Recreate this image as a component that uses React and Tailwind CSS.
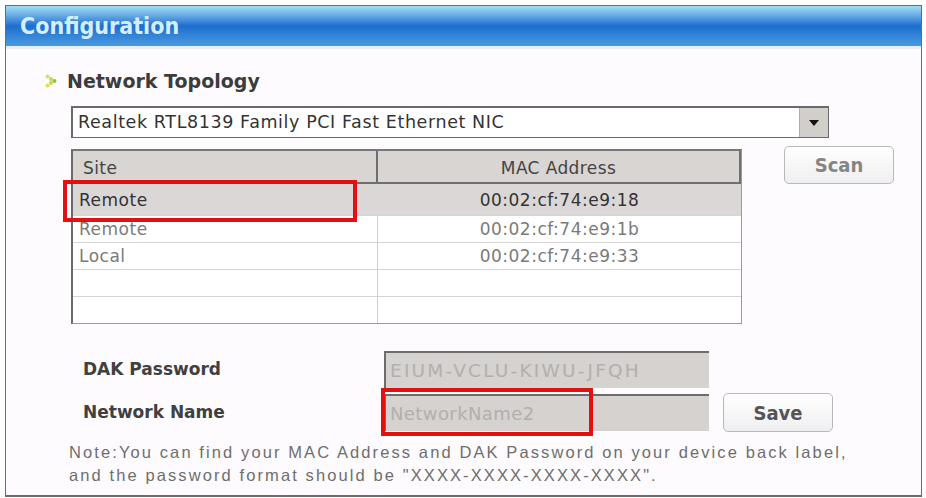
import React from 'react';

const rows = [
  { site: 'Remote', mac: '00:02:cf:74:e9:18', selected: true },
  { site: 'Remote', mac: '00:02:cf:74:e9:1b' },
  { site: 'Local', mac: '00:02:cf:74:e9:33' },
  { site: '', mac: '' },
  { site: '', mac: '' },
];

const ui = { fontFamily: '"DejaVu Sans", "Noto Sans", sans-serif' };
const cond = { fontFamily: '"DejaVu Sans Condensed", "DejaVu Sans", sans-serif' };
const arial = { fontFamily: '"Liberation Sans", Arial, sans-serif' };

function Bullet() {
  return (
    <svg width="12" height="14" viewBox="0 0 12 14" className="shrink-0">
      <circle cx="2.5" cy="2.5" r="2" fill="#e0de5a" />
      <circle cx="6" cy="5" r="2" fill="#c9d84a" />
      <circle cx="9.5" cy="7" r="2" fill="#8fc43c" />
      <circle cx="6" cy="9" r="2" fill="#c9d84a" />
      <circle cx="2.5" cy="11.5" r="2" fill="#e0de5a" />
    </svg>
  );
}

function XpButton({ children, className }) {
  return (
    <div
      className={
        'flex items-center justify-center rounded-[5px] border border-[#b9b9b9] bg-gradient-to-b from-white to-[#efeef0] text-[20px] font-bold ' +
        className
      }
      style={cond}
    >
      {children}
    </div>
  );
}

export default function App() {
  return (
    <div className="w-[926px] h-[498px] bg-white overflow-hidden">
      {/* caption line above the panel, clipped by the crop */}
      <div className="h-[5px] overflow-hidden pl-[2px]">
        <div className="-mt-[18px] text-[17px] leading-[20px] font-bold text-black" style={arial}>
          Figure 3-14 Configuration Utility: Network Topology
        </div>
      </div>

      <div className="ml-[5px] w-[917px] h-[492px] border border-[#6b6b6b] border-b-2 bg-[#fdfbfd] flex flex-col">
        {/* title bar */}
        <div className="h-[40px] shrink-0 bg-gradient-to-b from-[#a6def6] via-[#1c6ecf] to-[#4a9ae0] flex items-center pl-[14px]">
          <span className="text-[23px] font-bold text-[#d3efff]" style={cond}>
            Configuration
          </span>
        </div>
        <div className="h-[3px] shrink-0 bg-[#e9eef3]" />

        <div className="relative flex-1 pl-[39px]">
          {/* section heading */}
          <div className="mt-[21px] flex h-[22px] items-center gap-[10px]">
            <Bullet />
            <span className="text-[19px] font-bold text-[#3c3c3c]" style={ui}>
              Network Topology
            </span>
          </div>

          {/* adapter select */}
          <div className="ml-[26px] mt-[14px] flex h-[32px] w-[758px] items-center border border-[#6a6a6a] border-l-2 border-t-2 bg-white">
            <span className="flex-1 pl-[5px] text-[17.5px] tracking-[0.6px] text-[#333]" style={ui}>
              Realtek RTL8139 Family PCI Fast Ethernet NIC
            </span>
            <div className="flex h-[29px] w-[29px] items-center justify-center border-l border-[#b0b0b0] bg-[#d2cfcb]">
              <svg width="10" height="6" viewBox="0 0 10 6">
                <path d="M0 0h10L5 6z" fill="#111" />
              </svg>
            </div>
          </div>

          {/* site table + scan */}
          <div className="ml-[26px] mt-[8px] flex items-start">
            <div className="mt-[3px] w-[671px] border border-[#9a9a9a] border-l-2 border-l-[#6a6a6a] border-t-2 border-t-[#777] bg-white">
              <div className="flex h-[33px] bg-[#d8d5d2] border-b-2 border-[#6f6f6f] text-[17px] tracking-[0.4px] text-[#444]" style={ui}>
                <div className="w-[305px] border-r-2 border-[#6f6f6f] pl-[10px] flex items-end pb-[1px]">Site</div>
                <div className="flex-1 border-r-2 border-[#6f6f6f] flex items-end justify-center pb-[1px]">MAC Address</div>
              </div>
              {rows.map((r, i) => (
                <div
                  key={i}
                  className={
                    'flex text-[17px] tracking-[0.5px] ' +
                    (i === 0 ? 'h-[31px] bg-[#dad7d6] text-[#333]' : 'h-[27px] border-t border-[#d4d4d4] text-[#7a7a7a]')
                  }
                  style={ui}
                >
                  <div className={'w-[305px] pl-[6px] flex items-center pt-[2px] ' + (i === 0 ? '' : 'border-r border-[#cfcfcf]')}>
                    {r.site}
                  </div>
                  <div className="flex-1 flex items-center justify-center pt-[2px]">{r.mac}</div>
                </div>
              ))}
            </div>
            <XpButton className="ml-[42px] h-[38px] w-[110px] text-[#858585]">Scan</XpButton>
          </div>

          {/* credentials */}
          <div className="ml-[38px] mt-[27px] flex items-center">
            <span className="w-[301px] text-[17px] font-bold text-[#404040]" style={ui}>
              DAK Password
            </span>
            <div className="flex h-[37px] w-[325px] items-center border-t-2 border-l-2 border-[#6c6c6c] bg-[#d5d2cf] pl-[4px] text-[18.5px] tracking-[2.2px] text-[#b3afae]" style={ui}>
              EIUM-VCLU-KIWU-JFQH
            </div>
          </div>
          <div className="ml-[38px] mt-[5px] flex items-center">
            <span className="w-[301px] text-[17px] font-bold text-[#404040]" style={ui}>
              Network Name
            </span>
            <div className="flex h-[37px] w-[325px] items-center border-t-2 border-l-2 border-[#6c6c6c] bg-[#d5d2cf] pl-[4px] text-[18px] tracking-[0.4px] text-[#b3afae]" style={ui}>
              NetworkName2
            </div>
            <XpButton className="ml-[14px] h-[39px] w-[110px] text-[#555]">Save</XpButton>
          </div>

          <div className="ml-[24px] mt-[9px] text-[16.5px] leading-[23px] tracking-[2.1px] text-[#6e6e6e]" style={arial}>
            <div>Note:You can find your MAC Address and DAK Password on your device back label,</div>
            <div>and the password format should be "XXXX-XXXX-XXXX-XXXX".</div>
          </div>

          {/* red highlight marks */}
          <div className="pointer-events-none absolute left-[57px] top-[131px] h-[42px] w-[294px] border-[4px] border-[#e3100f]" />
          <div className="pointer-events-none absolute left-[375px] top-[339px] h-[48px] w-[212px] border-[4px] border-[#e3100f]" />
        </div>
      </div>
    </div>
  );
}
